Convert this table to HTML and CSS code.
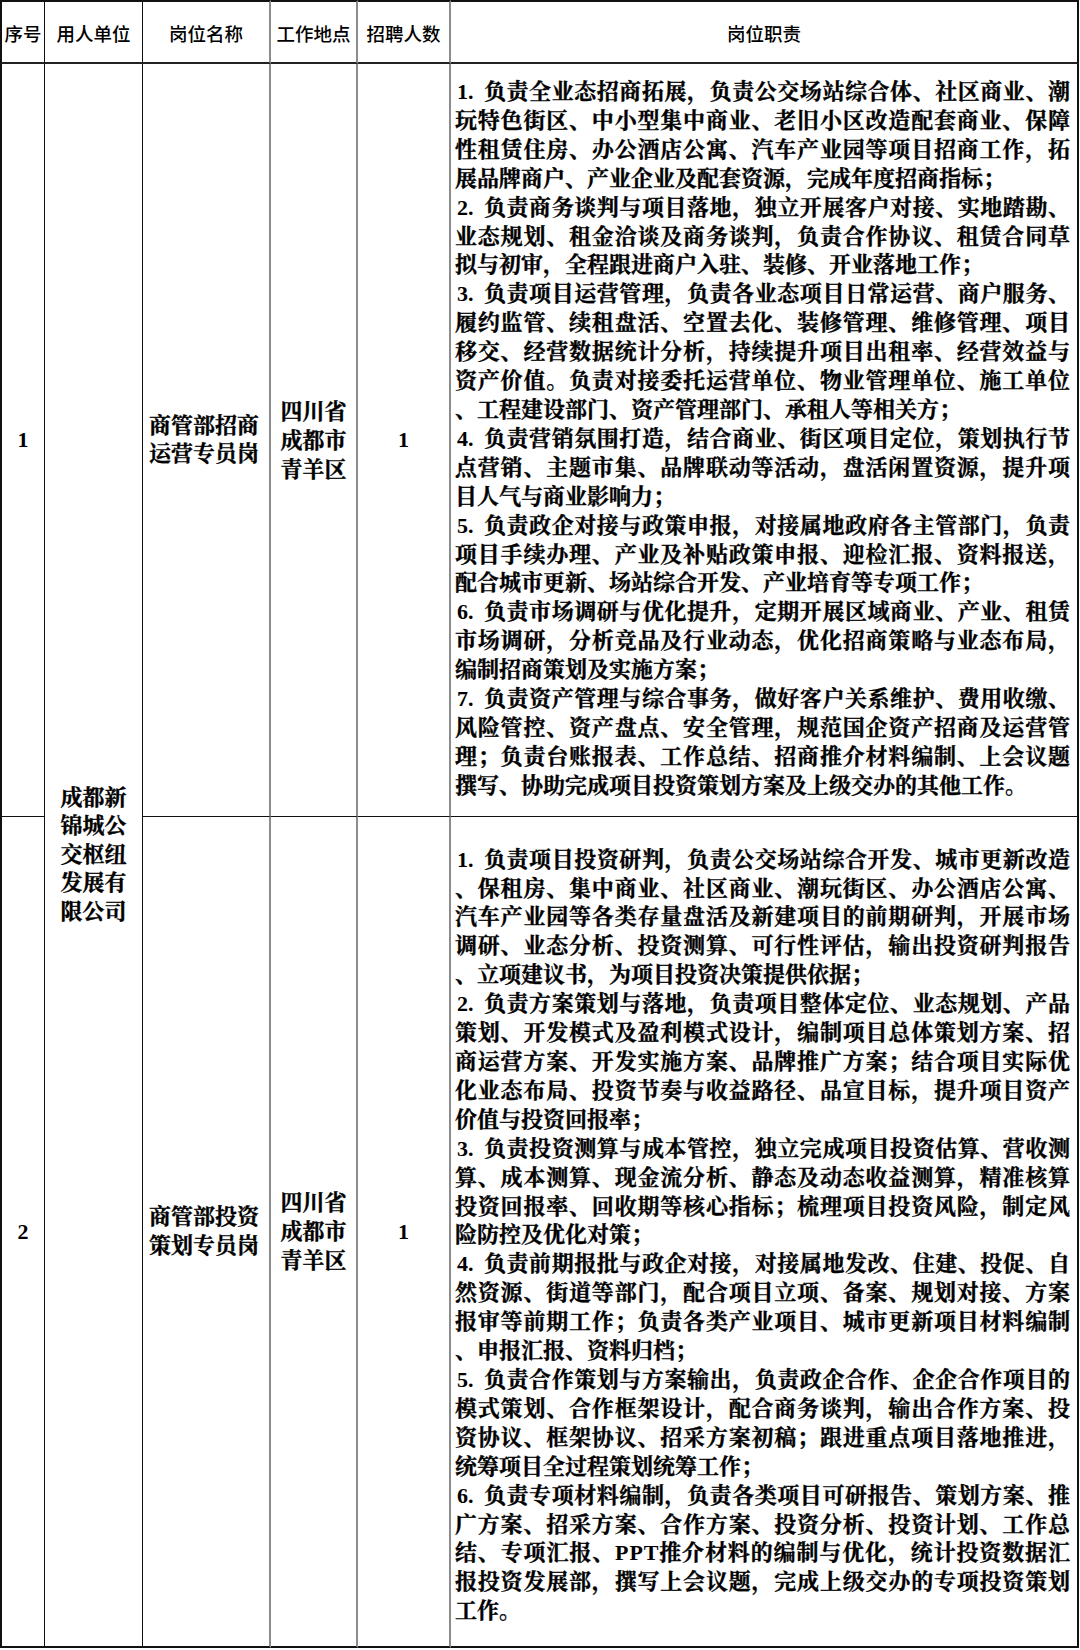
FILE: index.html
```html
<!DOCTYPE html>
<html lang="zh-CN">
<head>
<meta charset="utf-8">
<title>岗位职责</title>
<link rel="stylesheet" href="styles.css">
</head>
<body>
<div class="sheet">
  <div class="cell hd c1">序号</div>
  <div class="cell hd c2">用人单位</div>
  <div class="cell hd c3">岗位名称</div>
  <div class="cell hd c4">工作地点</div>
  <div class="cell hd c5">招聘人数</div>
  <div class="cell hd c6">岗位职责</div>

  <div class="cell c1 num">1</div>
  <div class="cell c2 org">成都新<br>锦城公<br>交枢纽<br>发展有<br>限公司</div>
  <div class="cell c3 pos">商管部招商<br>运营专员岗</div>
  <div class="cell c4 loc">四川省<br>成都市<br>青羊区</div>
  <div class="cell c5 num">1</div>
  <div class="cell c6 duty">
    <div class="j"><b class="no">1.</b>负责全业态招商拓展，负责公交场站综合体、社区商业、潮</div>
    <div class="j">玩特色街区、中小型集中商业、老旧小区改造配套商业、保障</div>
    <div class="j">性租赁住房、办公酒店公寓、汽车产业园等项目招商工作，拓</div>
    <div>展品牌商户、产业企业及配套资源，完成年度招商指标；</div>
    <div class="j"><b class="no">2.</b>负责商务谈判与项目落地，独立开展客户对接、实地踏勘、</div>
    <div class="j">业态规划、租金洽谈及商务谈判，负责合作协议、租赁合同草</div>
    <div>拟与初审，全程跟进商户入驻、装修、开业落地工作；</div>
    <div class="j"><b class="no">3.</b>负责项目运营管理，负责各业态项目日常运营、商户服务、</div>
    <div class="j">履约监管、续租盘活、空置去化、装修管理、维修管理、项目</div>
    <div class="j">移交、经营数据统计分析，持续提升项目出租率、经营效益与</div>
    <div class="j">资产价值。负责对接委托运营单位、物业管理单位、施工单位</div>
    <div>、工程建设部门、资产管理部门、承租人等相关方；</div>
    <div class="j"><b class="no">4.</b>负责营销氛围打造，结合商业、街区项目定位，策划执行节</div>
    <div class="j">点营销、主题市集、品牌联动等活动，盘活闲置资源，提升项</div>
    <div>目人气与商业影响力；</div>
    <div class="j"><b class="no">5.</b>负责政企对接与政策申报，对接属地政府各主管部门，负责</div>
    <div class="j">项目手续办理、产业及补贴政策申报、迎检汇报、资料报送，</div>
    <div>配合城市更新、场站综合开发、产业培育等专项工作；</div>
    <div class="j"><b class="no">6.</b>负责市场调研与优化提升，定期开展区域商业、产业、租赁</div>
    <div class="j">市场调研，分析竞品及行业动态，优化招商策略与业态布局，</div>
    <div>编制招商策划及实施方案；</div>
    <div class="j"><b class="no">7.</b>负责资产管理与综合事务，做好客户关系维护、费用收缴、</div>
    <div class="j">风险管控、资产盘点、安全管理，规范国企资产招商及运营管</div>
    <div class="j">理；负责台账报表、工作总结、招商推介材料编制、上会议题</div>
    <div>撰写、协助完成项目投资策划方案及上级交办的其他工作。</div>
  </div>

  <div class="cell c1 num last">2</div>
  <div class="cell c3 pos last">商管部投资<br>策划专员岗</div>
  <div class="cell c4 loc last">四川省<br>成都市<br>青羊区</div>
  <div class="cell c5 num last">1</div>
  <div class="cell c6 duty last">
    <div class="j"><b class="no">1.</b>负责项目投资研判，负责公交场站综合开发、城市更新改造</div>
    <div class="j">、保租房、集中商业、社区商业、潮玩街区、办公酒店公寓、</div>
    <div class="j">汽车产业园等各类存量盘活及新建项目的前期研判，开展市场</div>
    <div class="j">调研、业态分析、投资测算、可行性评估，输出投资研判报告</div>
    <div>、立项建议书，为项目投资决策提供依据；</div>
    <div class="j"><b class="no">2.</b>负责方案策划与落地，负责项目整体定位、业态规划、产品</div>
    <div class="j">策划、开发模式及盈利模式设计，编制项目总体策划方案、招</div>
    <div class="j">商运营方案、开发实施方案、品牌推广方案；结合项目实际优</div>
    <div class="j">化业态布局、投资节奏与收益路径、品宣目标，提升项目资产</div>
    <div>价值与投资回报率；</div>
    <div class="j"><b class="no">3.</b>负责投资测算与成本管控，独立完成项目投资估算、营收测</div>
    <div class="j">算、成本测算、现金流分析、静态及动态收益测算，精准核算</div>
    <div class="j">投资回报率、回收期等核心指标；梳理项目投资风险，制定风</div>
    <div>险防控及优化对策；</div>
    <div class="j"><b class="no">4.</b>负责前期报批与政企对接，对接属地发改、住建、投促、自</div>
    <div class="j">然资源、街道等部门，配合项目立项、备案、规划对接、方案</div>
    <div class="j">报审等前期工作；负责各类产业项目、城市更新项目材料编制</div>
    <div>、申报汇报、资料归档；</div>
    <div class="j"><b class="no">5.</b>负责合作策划与方案输出，负责政企合作、企企合作项目的</div>
    <div class="j">模式策划、合作框架设计，配合商务谈判，输出合作方案、投</div>
    <div class="j">资协议、框架协议、招采方案初稿；跟进重点项目落地推进，</div>
    <div>统筹项目全过程策划统筹工作；</div>
    <div class="j"><b class="no">6.</b>负责专项材料编制，负责各类项目可研报告、策划方案、推</div>
    <div class="j">广方案、招采方案、合作方案、投资分析、投资计划、工作总</div>
    <div class="j">结、专项汇报、<b>PPT</b>推介材料的编制与优化，统计投资数据汇</div>
    <div class="j">报投资发展部，撰写上会议题，完成上级交办的专项投资策划</div>
    <div>工作。</div>
  </div>
</div>
<script src="justify.js"></script>
</body>
</html>
```

FILE: styles.css
```css
* { box-sizing: border-box; }

html, body {
  margin: 0;
  padding: 0;
  background: #fff;
}

body {
  width: 1080px;
  height: 1650px;
  overflow: hidden;
  color: #000;
  font-family: "Liberation Serif", "Noto Serif CJK SC", "Noto Sans CJK SC", serif;
}

.sheet {
  display: grid;
  grid-template-columns: 45px 98px 128px 87px 93px 628px;
  align-items: stretch;
}

.cell {
  display: flex;
  align-items: center;
  justify-content: center;
  text-align: center;
  font-size: 22px;
  font-weight: 700;
  -webkit-text-stroke: 0.35px #000;
  border-right: 1px solid #111;
  border-bottom: 1px solid #111;
}

.c1 { border-left: 2px solid #111; }
.c3, .c4 { border-right: 2px solid #8c8c8c; }
.c5 { border-right: 2px solid #8c8c8c; }
.c6 { border-right: 2px solid #111; }

.hd {
  height: 64px;
  border-top: 2px solid #111;
  border-bottom: 2px solid #222;
  font-family: "Noto Sans CJK SC", sans-serif;
  font-size: 18.5px;
  font-weight: 500;
  -webkit-text-stroke: 0;
  padding-top: 2px;
}

.org {
  grid-column: 2;
  grid-row: 2 / span 2;
  border-bottom: 2px solid #111;
  line-height: 28.5px;
}

.last { border-bottom: 2px solid #111; }

.num {
  font-weight: 700;
  font-size: 22px;
  -webkit-text-stroke: 0;
}

.pos {
  line-height: 28.4px;
  justify-content: flex-start;
  text-align: left;
  padding-left: 6px;
}

.loc {
  line-height: 29px;
}

.duty {
  display: block;
  text-align: left;
  line-height: 28.9px;
  padding: 14px 7px 15.5px 4px;
}

.duty.last {
  padding: 28.5px 7px 20px 4px;
}

.duty b {
  font-weight: 700;
  -webkit-text-stroke: 0;
}

.duty .no {
  display: inline-block;
  width: 29px;
  padding-left: 2px;
  letter-spacing: 0;
}

.j {
  white-space: nowrap;
}
```

FILE: justify.js
```js
(function () {
  var lines = document.querySelectorAll('.duty .j');
  lines.forEach(function (line) {
    var width = line.clientWidth;
    var range = document.createRange();
    range.selectNodeContents(line);
    var natural = range.getBoundingClientRect().width;
    var count = 0;
    var walker = document.createTreeWalker(line, NodeFilter.SHOW_TEXT, null);
    var node;
    while ((node = walker.nextNode())) {
      if (node.parentNode.classList && node.parentNode.classList.contains('no')) continue;
      count += Array.from(node.nodeValue.replace(/\s+/g, '')).length;
    }
    if (count > 1 && width > natural) {
      line.style.letterSpacing = ((width - natural) / (count - 1)) + 'px';
    }
  });
})();
```
